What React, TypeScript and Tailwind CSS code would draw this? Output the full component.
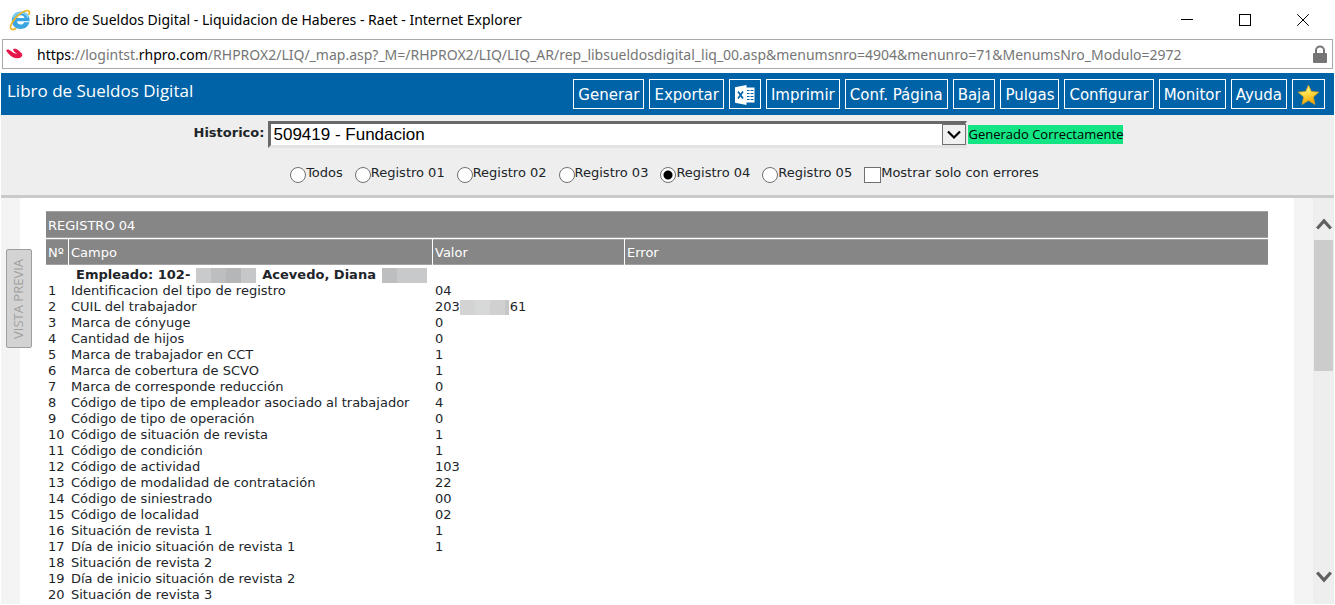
import type { ReactNode } from "react";

const segoe = "font-['Noto_Sans','Open_Sans',sans-serif]";
const segoeNarrow = "font-['Open_Sans','Noto_Sans',sans-serif]";

const fields: [string, ReactNode][] = [
  ["Identificacion del tipo de registro", "04"],
  [
    "CUIL del trabajador",
    <span className="flex h-4 items-center">
      203
      <Redacted tones={["w-[15px] bg-[#d3d3d3]", "w-[15px] bg-[#d7d9d8]", "w-[15px] bg-[#d0d0d0]", "w-[4px] bg-[#c6c6c6]"]} />
      <span className="pl-px">61</span>
    </span>,
  ],
  ["Marca de cónyuge", "0"],
  ["Cantidad de hijos", "0"],
  ["Marca de trabajador en CCT", "1"],
  ["Marca de cobertura de SCVO", "1"],
  ["Marca de corresponde reducción", "0"],
  ["Código de tipo de empleador asociado al trabajador", "4"],
  ["Código de tipo de operación", "0"],
  ["Código de situación de revista", "1"],
  ["Código de condición", "1"],
  ["Código de actividad", "103"],
  ["Código de modalidad de contratación", "22"],
  ["Código de siniestrado", "00"],
  ["Código de localidad", "02"],
  ["Situación de revista 1", "1"],
  ["Día de inicio situación de revista 1", "1"],
  ["Situación de revista 2", ""],
  ["Día de inicio situación de revista 2", ""],
  ["Situación de revista 3", ""],
];

function Redacted({ tones }: { tones: string[] }) {
  return (
    <span aria-hidden="true" className="flex h-[15px]">
      {tones.map((tone, i) => (
        <span key={i} className={`h-full ${tone}`} />
      ))}
    </span>
  );
}

function TitleBar() {
  return (
    <header className={`flex h-[39px] shrink-0 items-center pl-[9px] text-black ${segoe}`}>
      <svg viewBox="0 0 22 22" className="mr-1 h-[22px] w-[22px] shrink-0" aria-hidden="true">
        <path d="M20.500 13.200h-5.400c-.6 1.600-1.800 2.400-3.300 2.400-2.100 0-3.600-1.300-3.800-3.300h12.600C21.100 6.400 17.400 2.400 11.800 2.400c-5.200 0-9 3.900-9 9 0 5.100 3.800 8.500 9 8.500 4.200 0 7.400-2.400 8.700-6.700zM8.100 8.900c.5-1.800 1.900-2.700 3.700-2.700 1.900 0 3.300.9 3.700 2.700z" fill="#3aa5e0" />
        <path d="M4.300 8.800C5.800 5.200 8.600 3.700 11.800 3.700c3.500 0 6.200 1.900 7.200 5" fill="none" stroke="#8ad6f7" strokeWidth="1.400" />
        <path d="M19.800 6C21.500 2.200 19.700.7 15.700 2 10.200 4.200 3.200 11.500 1.700 16.800c-.9 3.700 1.400 4.700 5.500 2.600" fill="none" stroke="#efb92f" strokeWidth="1.800" />
      </svg>
      <h1 className="grow truncate text-[14px] leading-5">
        Libro de Sueldos Digital - Liquidacion de Haberes - Raet - Internet Explorer
      </h1>
      <button aria-label="Minimizar" className="flex h-full w-[58px] items-center justify-center">
        <svg width="12" height="12" viewBox="0 0 12 12" shapeRendering="crispEdges"><path d="M0 5.500h12" stroke="#000" /></svg>
      </button>
      <button aria-label="Maximizar" className="flex h-full w-[58px] items-center justify-center">
        <svg width="12" height="12" viewBox="0 0 12 12" shapeRendering="crispEdges"><path d="M.5.5h11v11H.5z" fill="none" stroke="#000" /></svg>
      </button>
      <button aria-label="Cerrar" className="mr-[3px] flex h-full w-[58px] items-center justify-center">
        <svg width="12" height="12" viewBox="0 0 12 12"><path d="M.2.2l11.600 11.600M11.800.2L.2 11.800" fill="none" stroke="#000" /></svg>
      </button>
    </header>
  );
}

function AddressBar() {
  return (
    <div className={`mr-[2px] ml-[2px] flex h-[30px] shrink-0 items-center border border-[#a9a9a9] pr-1 pl-[3px] text-[14px] text-[#767676] ${segoe}`}>
      <svg viewBox="0 0 17 12" className="h-3 w-[17px] shrink-0" aria-hidden="true">
        <path d="M0 2.200C1.600.8 3.400 1.400 5 3c1.800 1.700 4 2.800 6.300 2.700C9 4.600 7 3.200 7.200 1c1.700-.8 3.700-.3 5.500 1.500C14.400 4.200 16.600 5.400 16.300 7.300c-.4 2-2.700 3.200-5.500 2.900C6.400 9.800 2.400 6.600 0 2.200z" fill="#e5174a" />
      </svg>
      <div className="ml-[14px] grow truncate whitespace-nowrap">
        <span className="text-black">https</span>://logintst.<span className="text-black">rhpro.com</span>
        /RHPROX2/LIQ/_map.asp?_M=/RHPROX2/LIQ/LIQ_AR/rep_libsueldosdigital_liq_00.asp&amp;menumsnro=4904&amp;menunro=71&amp;MenumsNro_Modulo=2972
      </div>
      <svg viewBox="0 0 16 18" className="h-[18px] w-4 shrink-0" aria-label="Conexión segura">
        <path d="M4 9V5.500a4 4 0 0 1 8 0V9" fill="none" stroke="#757575" strokeWidth="2" />
        <rect x="1" y="8" width="14" height="10" rx="1" fill="#757575" />
      </svg>
    </div>
  );
}

function ToolButton({ children, label }: { children: ReactNode; label?: string }) {
  return (
    <button aria-label={label} className="flex h-[30px] items-center border border-white px-1 pt-px text-[15px] leading-7 whitespace-nowrap">
      {children}
    </button>
  );
}

function Toolbar() {
  return (
    <div className="mr-px ml-px flex h-[42px] shrink-0 items-center bg-[#0063a8] pr-[9px] pl-[6px] text-white">
      <h2 className={`grow self-start pt-[6px] text-[17px] leading-6 whitespace-nowrap ${segoeNarrow}`}>Libro de Sueldos Digital</h2>
      <nav className="flex gap-[5px]">
        <ToolButton>Generar</ToolButton>
        <ToolButton>Exportar</ToolButton>
        <ToolButton label="Excel">
          <svg viewBox="0 0 22 20" className="h-5 w-[22px]" aria-hidden="true">
            <path d="M12 2.500h8.500v15H12" fill="#fff" />
            <path d="M13 5.500h2.500M13 8.500h2.500M13 11.500h2.500M13 14.500h2.500M16.500 5.500h3M16.500 8.500h3M16.500 11.500h3M16.500 14.500h3" stroke="#0063a8" strokeWidth="1" />
            <path d="M1 2.200L12.500 0v20L1 17.800z" fill="#fff" />
            <path d="M4 6.500l5 7M9 6.500l-5 7" stroke="#0063a8" strokeWidth="1.700" />
          </svg>
        </ToolButton>
        <ToolButton>Imprimir</ToolButton>
        <ToolButton>Conf. Página</ToolButton>
        <ToolButton>Baja</ToolButton>
        <ToolButton>Pulgas</ToolButton>
        <ToolButton>Configurar</ToolButton>
        <ToolButton>Monitor</ToolButton>
        <ToolButton>Ayuda</ToolButton>
        <ToolButton label="Favoritos">
          <svg viewBox="0 0 23 22" className="h-[22px] w-[23px]" aria-hidden="true">
            <defs>
              <linearGradient id="gold" x1="0" y1="0" x2="0.3" y2="1">
                <stop offset="0" stopColor="#fff7b0" />
                <stop offset="0.5" stopColor="#ffe04a" />
                <stop offset="1" stopColor="#f5a800" />
              </linearGradient>
            </defs>
            <path d="M11.500 1.200l2.900 6.300 7.300.7-5.400 4.800 1.700 7.500-6.500-4-6.500 4L6.700 13 1.300 8.200l7.300-.7z" fill="url(#gold)" stroke="#d9a21b" strokeWidth=".8" strokeLinejoin="round" />
          </svg>
        </ToolButton>
      </nav>
    </div>
  );
}

function Radio({ label, checked }: { label: string; checked?: boolean }) {
  return (
    <label className="flex items-start">
      <input
        type="radio"
        name="registro"
        defaultChecked={checked}
        className="mt-[2px] h-4 w-4 appearance-none rounded-full border border-[#707070] bg-white checked:bg-[radial-gradient(circle,#000_0_4px,#fff_5px)]"
      />
      {label}
    </label>
  );
}

function Filters() {
  return (
    <form className="mr-px ml-px flex shrink-0 flex-col items-center border-b-3 border-[#cacaca] bg-[#eeeeee] pt-[6px] pb-[12px] text-[13px] leading-4 text-[#212529]">
      <div className="flex items-start pr-[18px]">
        <label htmlFor="historico" className="mt-1 mr-1 font-bold">Historico:</label>
        <div className="relative">
          <select
            id="historico"
            className="block h-[27px] w-[699px] appearance-none border-t-3 border-r-2 border-b-3 border-l-3 border-t-[#696969] border-r-[#e3e3e3] border-b-[#e3e3e3] border-l-[#696969] bg-white pl-[2px] font-['Liberation_Sans',sans-serif] text-[17px] leading-5 text-black"
          >
            <option>509419 - Fundacion</option>
          </select>
          <span className="pointer-events-none absolute top-[3px] right-px flex h-[21px] w-6 items-center justify-center border border-[#707070] bg-[#f0f0f0]">
            <svg width="14" height="10" viewBox="0 0 14 10" aria-hidden="true">
              <path d="M1 1.500L7 7.500l6-6" fill="none" stroke="#000" strokeWidth="2.200" />
            </svg>
          </span>
        </div>
        <span className={`mt-1 ml-px bg-[#14e584] text-[13px] leading-[19px] text-black ${segoeNarrow}`}>Generado Correctamente</span>
      </div>
      <div className="mt-[17px] flex gap-3 pr-[6px]">
        <Radio label="Todos" />
        <Radio label="Registro 01" />
        <Radio label="Registro 02" />
        <Radio label="Registro 03" />
        <Radio label="Registro 04" checked />
        <Radio label="Registro 05" />
        <label className="flex items-start">
          <input type="checkbox" className="mt-[2px] h-4 w-[17px] appearance-none border border-[#707070] bg-white checked:bg-[#707070]" />
          Mostrar solo con errores
        </label>
      </div>
    </form>
  );
}

const th = "border-r border-b border-white bg-[#868686] pt-[2px] pb-0 pl-[2px] text-left font-normal shadow-[inset_0_1px_0_#a2a2a2,inset_0_-1px_0_#a2a2a2]";

function RecordTable() {
  return (
    <table className="w-full table-fixed border-separate border-spacing-0 text-[13px] leading-4 text-[#212529]">
      <colgroup>
        <col className="w-[23px]" />
        <col className="w-[364px]" />
        <col className="w-[192px]" />
        <col />
      </colgroup>
      <thead className="text-white">
        <tr className="h-7"><th colSpan={4} className={th}>REGISTRO 04</th></tr>
        <tr className="h-[27px]">
          <th className={th}>Nº</th>
          <th className={th}>Campo</th>
          <th className={th}>Valor</th>
          <th className={th}>Error</th>
        </tr>
      </thead>
      <tbody>
        <tr>
          <td colSpan={4} className="p-0 pt-px pl-[30px] font-bold">
            <span className="flex h-4 items-center gap-[6px] whitespace-nowrap">
              Empleado: 102-
              <Redacted tones={["w-[15px] bg-[#c9cacb]", "w-[15px] bg-[#bdbebf]", "w-[15px] bg-[#b5b6b7]", "w-[15px] bg-[#c6c7c8]"]} />
              Acevedo, Diana
              <Redacted tones={["w-[15px] bg-[#bdbebf]", "w-[30px] bg-[#c8c9cb]"]} />
            </span>
          </td>
        </tr>
        {fields.map(([name, value], i) => (
          <tr key={i} className="h-4 whitespace-nowrap">
            <td className="p-0 pl-[2px]">{i + 1}</td>
            <td className="p-0 pl-[2px]">{name}</td>
            <td className="p-0 pl-[2px]">{value}</td>
            <td className="p-0" />
          </tr>
        ))}
      </tbody>
    </table>
  );
}

function ScrollBar() {
  return (
    <div className="flex w-[21px] shrink-0 flex-col items-center bg-[#eeeeee] pt-5 pb-[21px]">
      <button aria-label="Subir">
        <svg width="16" height="12" viewBox="0 0 16 12" className="block"><path d="M1.200 10.500L8 3l6.800 7.500" fill="none" stroke="#606060" strokeWidth="3.200" /></svg>
      </button>
      <div className="mt-[10px] h-[131px] w-[19px] bg-[#cccccc]" />
      <button aria-label="Bajar" className="mt-auto">
        <svg width="16" height="12" viewBox="0 0 16 12" className="block"><path d="M1.200 1.500L8 9l6.800-7.500" fill="none" stroke="#606060" strokeWidth="3.200" /></svg>
      </button>
    </div>
  );
}

export default function App() {
  return (
    <div className="flex h-screen flex-col overflow-hidden bg-white font-['DejaVu_Sans',sans-serif]">
      <TitleBar />
      <AddressBar />
      <div className="h-1 shrink-0" />
      <Toolbar />
      <Filters />
      <div className="relative mr-px mb-px ml-px flex min-h-0 grow">
        <div className="w-[19px] shrink-0 bg-[#f4f4f4]" />
        <main className="min-w-0 grow overflow-hidden pt-[13px] pr-[25px] pl-[26px]">
          <RecordTable />
        </main>
        <div className="w-[19px] shrink-0 bg-[#f4f4f4]" />
        <ScrollBar />
        <button className={`absolute top-[51px] left-[5px] flex h-[99px] w-[26px] items-center justify-center rounded-[2px] border border-[#9e9e9e] bg-[#d3d3d3] text-[13px] text-[#a0a0a0] ${segoeNarrow}`}>
          <span className="rotate-180 whitespace-nowrap [writing-mode:vertical-rl]">VISTA PREVIA</span>
        </button>
      </div>
    </div>
  );
}
